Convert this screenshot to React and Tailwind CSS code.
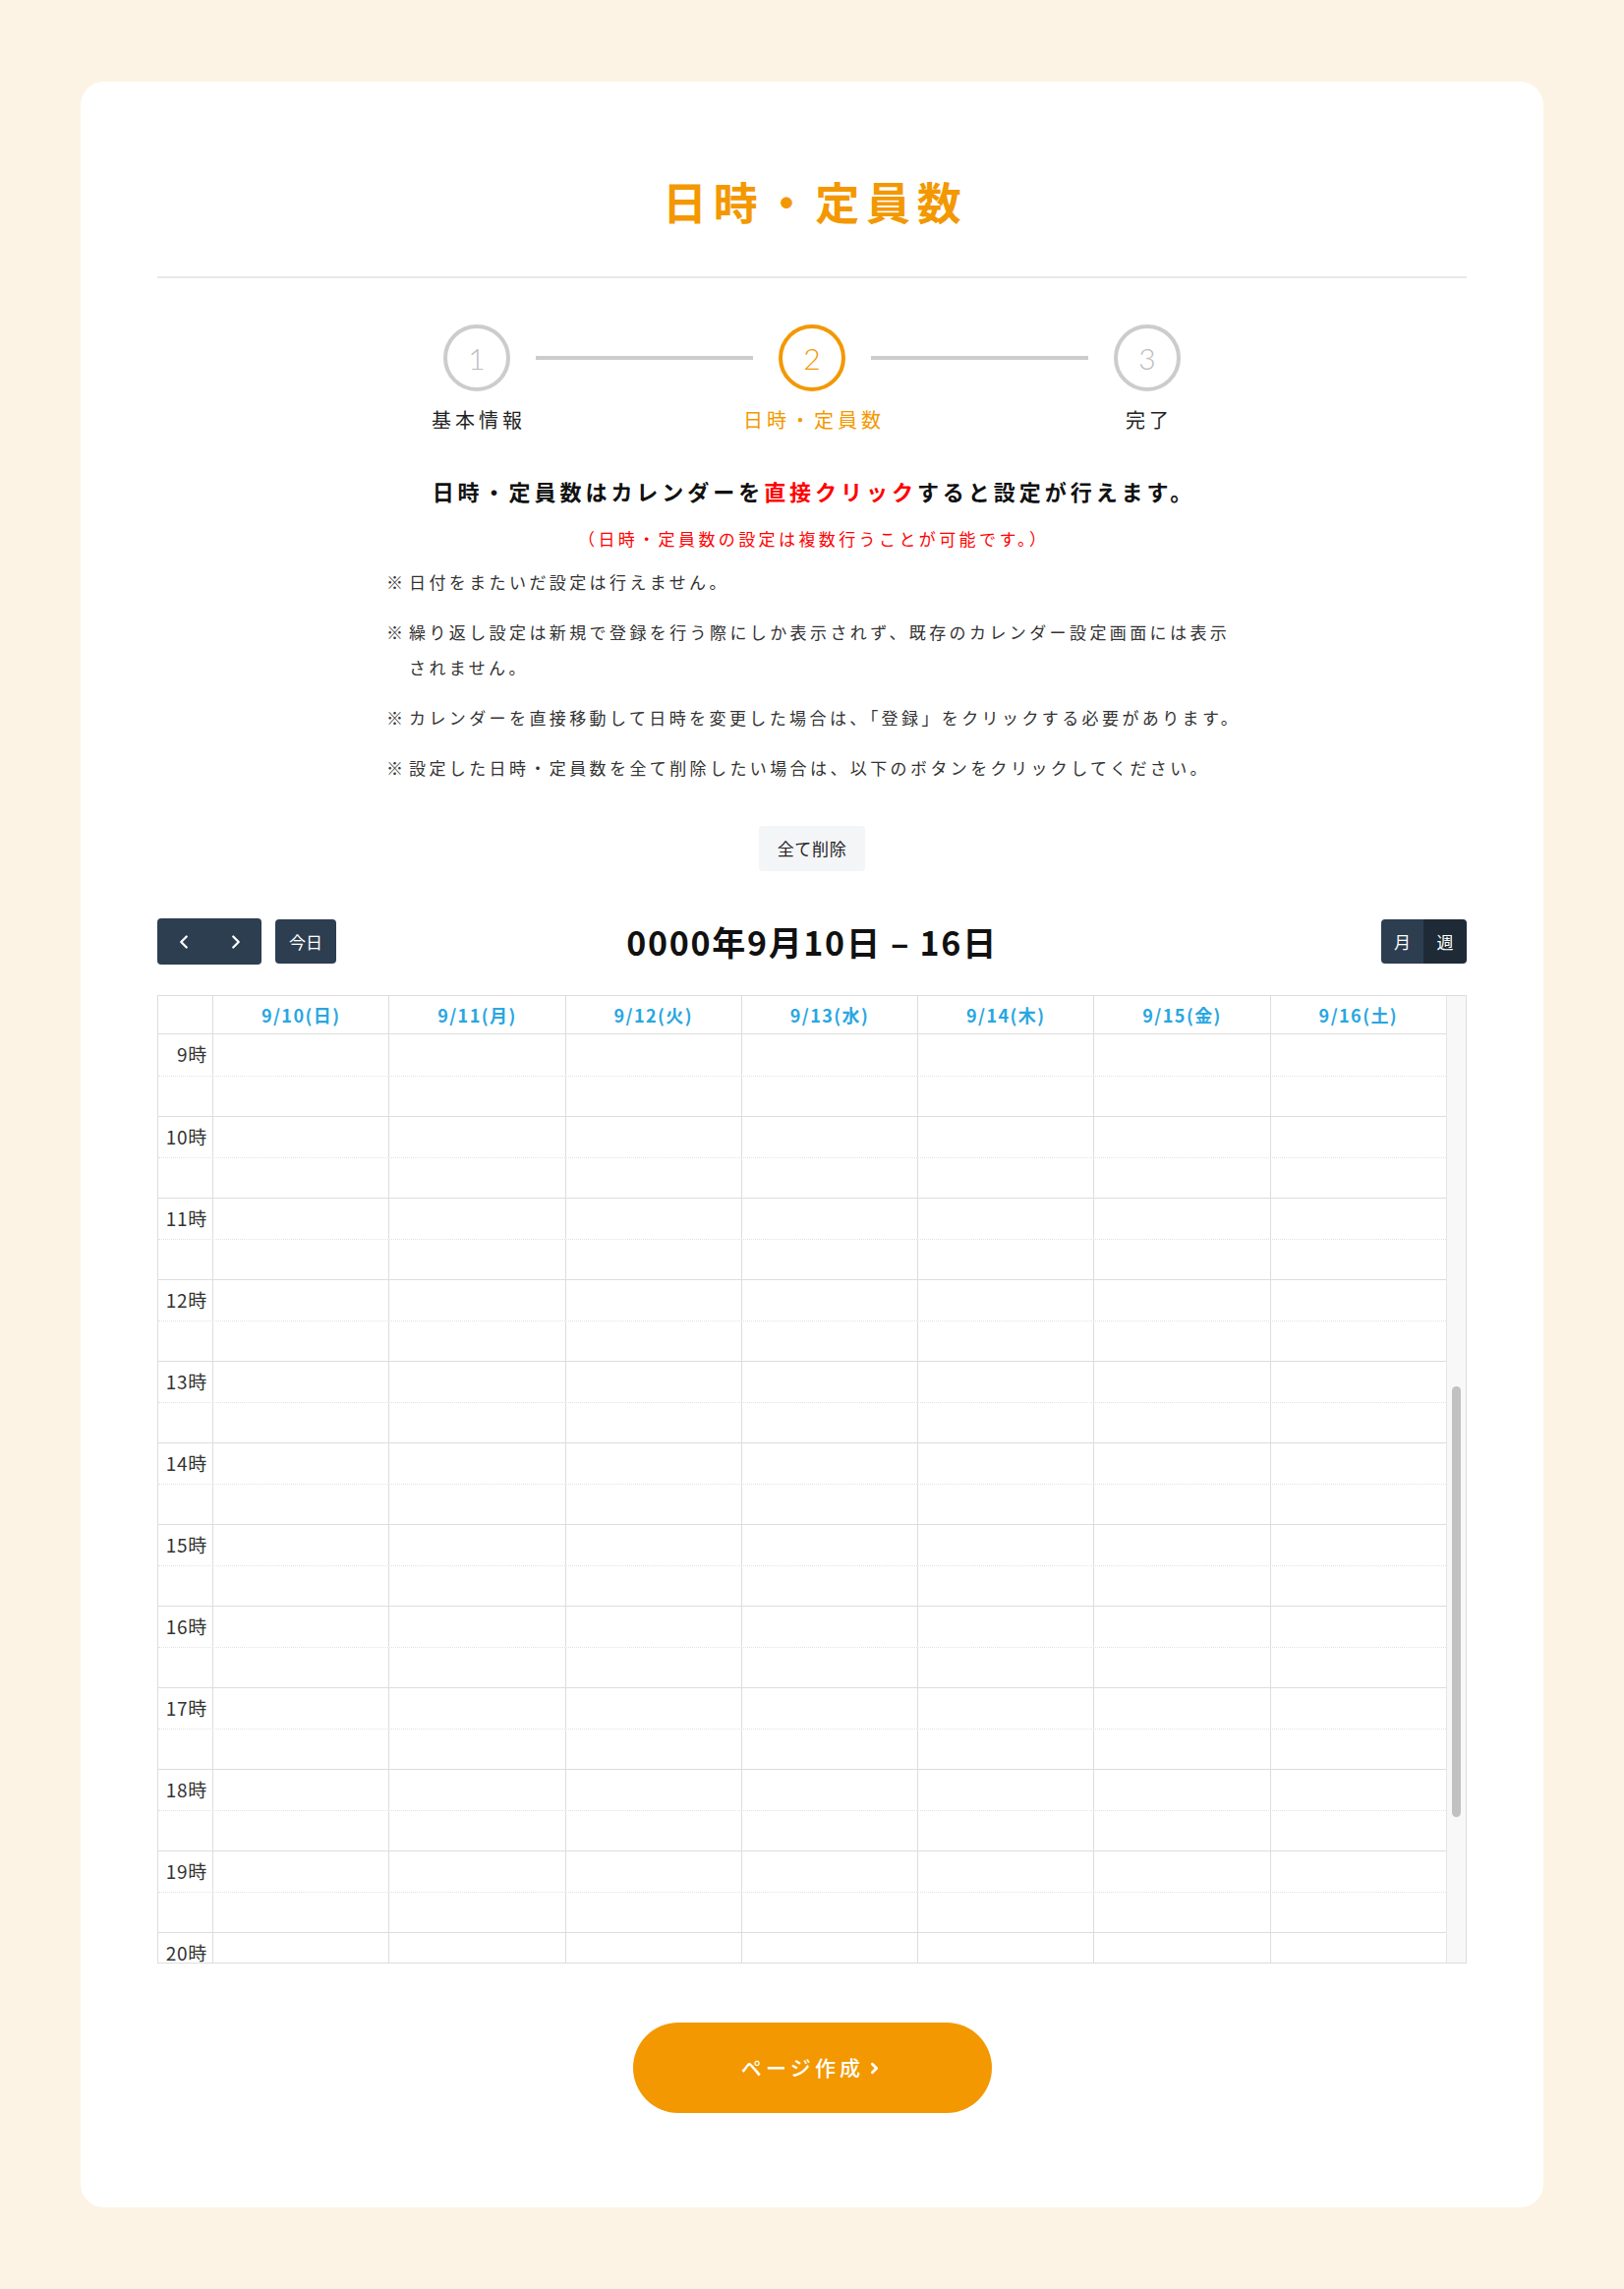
import React from 'react';
import { ChevronLeft, ChevronRight } from 'lucide-react';

const days = ['9/10(日)', '9/11(月)', '9/12(火)', '9/13(水)', '9/14(木)', '9/15(金)', '9/16(土)'];
const hours = [9, 10, 11, 12, 13, 14, 15, 16, 17, 18, 19, 20];

const notes = [
    ['日付をまたいだ設定は行えません。'],
    ['繰り返し設定は新規で登録を行う際にしか表示されず、既存のカレンダー設定画面には表示', 'されません。'],
    ['カレンダーを直接移動して日時を変更した場合は、「登録」をクリックする必要があります。'],
    ['設定した日時・定員数を全て削除したい場合は、以下のボタンをクリックしてください。'],
];

const Step = ({ num, label, active }) => (
    <div className="w-[68px] flex flex-col items-center">
        <div
            className={
                active
                    ? 'w-[68px] h-[68px] rounded-full border-[4px] border-[#f39800] text-[#f39800] flex items-center justify-center text-[30px] font-light font-["Lato",sans-serif]'
                    : 'w-[68px] h-[68px] rounded-full border-[4px] border-[#cccccc] text-[#bdbdbd] flex items-center justify-center text-[30px] font-light font-["Lato",sans-serif]'
            }
        >
            {num}
        </div>
        <div
            className={
                active
                    ? 'mt-[14px] whitespace-nowrap text-[20px] leading-[30px] tracking-[0.2em] pl-[0.2em] text-[#f39800]'
                    : 'mt-[14px] whitespace-nowrap text-[20px] leading-[30px] tracking-[0.2em] pl-[0.2em] text-[#222]'
            }
        >
            {label}
        </div>
    </div>
);

const StepLine = () => <div className="mt-[32px] mx-[26px] w-[221px] h-[4px] bg-[#cccccc]"></div>;

const Row = ({ hour, first, half }) => (
    <div
        className={
            half
                ? 'grid grid-cols-[55px_repeat(7,minmax(0,1fr))] h-[41px] border-t border-dotted border-[#e2e2e2]'
                : first
                  ? 'grid grid-cols-[55px_repeat(7,minmax(0,1fr))] h-[42px]'
                  : 'grid grid-cols-[55px_repeat(7,minmax(0,1fr))] h-[42px] border-t border-[#dddddd]'
        }
    >
        <div className="text-right pr-[5px] text-[19px] leading-[40px] tracking-[0.04em] text-[#333] whitespace-nowrap">{half ? '' : `${hour}時`}</div>
        {days.map((d) => (
            <div key={d} className="border-l border-solid border-[#dddddd]"></div>
        ))}
    </div>
);

const App = () => {
    return (
        <div className="min-h-screen bg-[#fcf3e4] px-[82px] pt-[83px] pb-[84px] font-['Noto_Sans_CJK_JP','Noto_Sans',sans-serif]">
            <div className="bg-white rounded-[24px] px-[78px] pt-[89px] pb-[96px]">
                {/* Heading */}
                <div className="border-b-2 border-[#e8e8e8] pb-[43px]">
                    <h1 className="text-center text-[45px] leading-[66px] font-bold tracking-[0.15em] pl-[0.15em] text-[#f39800]">日時・定員数</h1>
                </div>

                {/* Stepper */}
                <div className="mt-[47px] flex items-start justify-center">
                    <Step num="1" label="基本情報" />
                    <StepLine />
                    <Step num="2" label="日時・定員数" active />
                    <StepLine />
                    <Step num="3" label="完了" />
                </div>

                <p className="mt-[41px] text-center text-[22px] leading-[32px] font-bold tracking-[0.18em] pl-[0.18em] text-[#111]">
                    日時・定員数はカレンダーを<span className="text-[#ff0000]">直接クリック</span>すると設定が行えます。
                </p>
                <p className="mt-[19px] text-center text-[17px] leading-[28px] tracking-[0.2em] pl-[0.2em] text-[#ff0000]">
                    （日時・定員数の設定は複数行うことが可能です。）
                </p>

                <div className="mt-[12px] w-[866px] mx-auto flex flex-col gap-[15px]">
                    {notes.map((n) => (
                        <div key={n[0]} className="flex text-[17px] leading-[36px] tracking-[0.2em] text-[#333] whitespace-nowrap">
                            <span className="w-[23px] shrink-0 tracking-normal">※</span>
                            <span>
                                {n.map((line, i) => (
                                    <React.Fragment key={line}>
                                        {i > 0 && <br />}
                                        {line}
                                    </React.Fragment>
                                ))}
                            </span>
                        </div>
                    ))}
                </div>

                <div className="mt-[41px] flex justify-center">
                    <button className="h-[46px] px-[19px] rounded-[4px] bg-[#f4f5f7] text-[17px] tracking-[0.04em] text-[#222]">全て削除</button>
                </div>

                {/* Calendar toolbar */}
                <div className="mt-[48px] grid grid-cols-[1fr_auto_1fr] items-center">
                    <div className="flex items-center gap-[14px]">
                        <div className="flex rounded-[4px] overflow-hidden">
                            <button className="w-[53px] h-[47px] bg-[#2c3e50] text-white flex items-center justify-center">
                                <ChevronLeft size={22} strokeWidth={2.5} />
                            </button>
                            <button className="w-[53px] h-[47px] bg-[#2c3e50] text-white flex items-center justify-center">
                                <ChevronRight size={22} strokeWidth={2.5} />
                            </button>
                        </div>
                        <button className="w-[62px] h-[45px] rounded-[4px] bg-[#2c3e50] text-white text-[17px]">今日</button>
                    </div>
                    <h2 className="text-[34px] leading-[44px] font-bold tracking-[0.05em] text-[#111]">0000年9月10日 – 16日</h2>
                    <div className="flex justify-end">
                        <div className="flex rounded-[4px] overflow-hidden">
                            <button className="w-[43px] h-[45px] bg-[#2c3e50] text-white text-[17px]">月</button>
                            <button className="w-[44px] h-[45px] bg-[#1e2b37] text-white text-[17px]">週</button>
                        </div>
                    </div>
                </div>

                {/* Calendar */}
                <div className="mt-[31px] flex border border-[#dddddd]">
                    <div className="flex-1 min-w-0">
                        <div className="grid grid-cols-[55px_repeat(7,minmax(0,1fr))] h-[39px] border-b border-[#dddddd]">
                            <div></div>
                            {days.map((d) => (
                                <div key={d} className="border-l border-[#dddddd] flex items-center justify-center text-[18px] font-bold tracking-[0.08em] text-[#29a7e1]">
                                    {d}
                                </div>
                            ))}
                        </div>
                        <div className="h-[944px] overflow-hidden">
                            {hours.map((h, i) => (
                                <React.Fragment key={h}>
                                    <Row hour={h} first={i === 0} />
                                    <Row hour={h} half />
                                </React.Fragment>
                            ))}
                        </div>
                    </div>
                    {/* scrollbar */}
                    <div className="w-[20px] shrink-0 bg-[#f8f8f8] border-l border-[#e6e6e6]">
                        <div className="mt-[397px] mx-auto w-[9px] h-[438px] rounded-full bg-[#c1c1c1]"></div>
                    </div>
                </div>

                <div className="mt-[60px] flex justify-center">
                    <button className="w-[365px] h-[92px] rounded-full bg-[#f39800] text-white text-[21px] font-medium tracking-[0.2em] flex items-center justify-center gap-[2px]">
                        ページ作成
                        <ChevronRight size={17} strokeWidth={4} />
                    </button>
                </div>
            </div>
        </div>
    );
};

export default App;
